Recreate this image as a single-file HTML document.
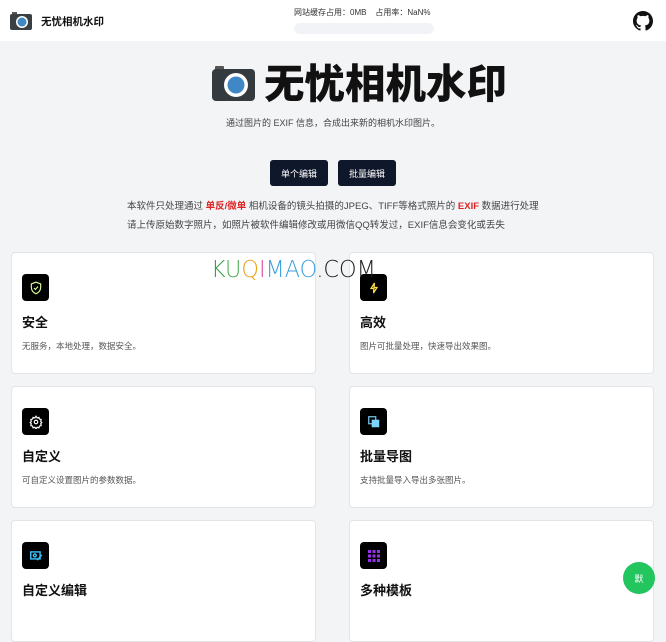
<!DOCTYPE html>
<html><head><meta charset="utf-8"><style>
*{margin:0;padding:0;box-sizing:border-box}
body{width:666px;height:604px;overflow:hidden;background:#f3f4f6;font-family:"Liberation Sans","Noto Sans CJK SC",sans-serif;position:relative;color:#111}
.hdr{position:absolute;left:0;top:0;width:666px;height:41px;background:#fff}
.abs{position:absolute}
.card{position:absolute;width:305px;height:122px;background:#fff;border:1px solid #e2e4e8;border-radius:4px}
.ib{position:absolute;left:10px;top:21px;width:27px;height:27px;background:#000;border-radius:4px;display:flex;align-items:center;justify-content:center}
.ct{position:absolute;left:10px;top:59px;font-size:13px;font-weight:bold}
.cd{position:absolute;left:10px;top:87px;font-size:8.5px;color:#555}
.btn{position:absolute;top:160px;width:58px;height:26px;background:#0f172a;border-radius:3px;color:#fff;font-size:9px;display:flex;align-items:center;justify-content:center}
.tx{position:absolute;left:127px;font-size:9.5px;color:#444;white-space:nowrap}
.red{color:#dc2626;font-weight:bold}
</style></head><body>
<div class="hdr">
<svg class="abs" style="left:10px;top:12px" width="22" height="18" viewBox="0 0 22 18"><rect x="2" y="0" width="5" height="3" fill="#555"/><rect x="0" y="2" width="22" height="16" rx="2" fill="#3a3f44"/><circle cx="12" cy="10" r="6" fill="#fff"/><circle cx="12" cy="10" r="4.5" fill="#3f88c5"/></svg>
<div class="abs" style="left:41px;top:14px;font-size:10.5px;font-weight:bold">无忧相机水印</div>
<div class="abs" style="left:294px;top:7px;font-size:8px;color:#333">网站缓存占用：0MB&nbsp;&nbsp;&nbsp;&nbsp;占用率：NaN%</div>
<div class="abs" style="left:294px;top:23px;width:140px;height:11px;background:#f1f3f6;border-radius:6px"></div>
<svg class="abs" style="left:633px;top:11px" width="20" height="20" viewBox="0 0 16 16"><path fill="#111" d="M8 0C3.58 0 0 3.58 0 8c0 3.540 2.29 6.53 5.47 7.59.4.07.55-.17.55-.38v-1.33c-2.23.48-2.7-1.07-2.7-1.07-.36-.92-.89-1.17-.89-1.17-.73-.5.05-.49.05-.49.8.06 1.23.83 1.23.83.72 1.22 1.870.87 2.33.66.07-.52.28-.87.51-1.07-1.78-.2-3.65-.89-3.65-3.95 0-.87.31-1.59.82-2.15-.08-.2-.36-1.02.08-2.12 0 0 .67-.21 2.2.82.64-.18 1.32-.27 2-.27.68 0 1.36.09 2 .27 1.53-1.04 2.2-.82 2.2-.82.44 1.1.16 1.92.08 2.12.51.56.82 1.27.82 2.15 0 3.07-1.87 3.75-3.65 3.95.29.25.54.73.54 1.48v2.2c0 .21.15.46.55.38A8.013 8.013 0 0016 8c0-4.42-3.58-8-8-8z"/></svg>
</div>
<svg class="abs" style="left:212px;top:66px" width="43" height="35" viewBox="0 0 43 35"><rect x="3" y="0" width="9" height="5" rx="1" fill="#555"/><rect x="0" y="3" width="43" height="32" rx="4" fill="#353a3f"/><circle cx="24" cy="19" r="12" fill="#fff"/><circle cx="24" cy="19" r="8.5" fill="#3f88c5"/></svg>
<div class="abs" style="left:264px;top:61px;font-size:40.5px;font-weight:900;white-space:nowrap;line-height:46px">无忧相机水印</div>
<div class="abs" style="left:0;width:666px;top:116px;text-align:center;font-size:9px;color:#444">通过图片的 EXIF 信息，合成出来新的相机水印图片。</div>
<div class="btn" style="left:270px">单个编辑</div>
<div class="btn" style="left:338px">批量编辑</div>
<div class="tx" style="top:198px">本软件只处理通过 <span class="red">单反/微单</span> 相机设备的镜头拍摄的JPEG、TIFF等格式照片的 <span class="red">EXIF</span> 数据进行处理</div>
<div class="tx" style="top:217px">请上传原始数字照片，如照片被软件编辑修改或用微信QQ转发过，EXIF信息会变化或丢失</div>

<div class="card" style="left:11px;top:252px"><div class="ib"><svg width="14" height="14" viewBox="0 0 24 24" fill="none" stroke="#d9f99d" stroke-width="2"><path d="M12 2l8 3v6c0 5-3.5 9-8 11-4.5-2-8-6-8-11V5z"/><path d="M8.5 12l2.5 2.5 4.5-5"/></svg></div><div class="ct">安全</div><div class="cd">无服务，本地处理，数据安全。</div></div>
<div class="card" style="left:349px;top:252px"><div class="ib"><svg width="12" height="14" viewBox="0 0 24 24" fill="none" stroke="#fde047" stroke-width="2.5"><path d="M13 2L6 13h6l-1 9 7-11h-6z"/></svg></div><div class="ct">高效</div><div class="cd">图片可批量处理，快速导出效果图。</div></div>
<div class="card" style="left:11px;top:386px"><div class="ib"><svg width="14" height="14" viewBox="0 0 24 24" fill="none" stroke="#fff" stroke-width="2"><circle cx="12" cy="12" r="3"/><path d="M12 2l2 3 3-1 1 3 3 1-1 3 2 2-2 2 1 3-3 1-1 3-3-1-2 3-2-3-3 1-1-3-3-1 1-3-2-2 2-2-1-3 3-1 1-3 3 1z"/></svg></div><div class="ct">自定义</div><div class="cd">可自定义设置图片的参数数据。</div></div>
<div class="card" style="left:349px;top:386px"><div class="ib"><svg width="14" height="14" viewBox="0 0 24 24"><rect x="3" y="3" width="12" height="12" fill="none" stroke="#7dd3fc" stroke-width="2"/><rect x="8" y="8" width="13" height="13" fill="#7dd3fc"/></svg></div><div class="ct">批量导图</div><div class="cd">支持批量导入导出多张图片。</div></div>
<div class="card" style="left:11px;top:520px"><div class="ib"><svg width="14" height="14" viewBox="0 0 24 24" fill="none" stroke="#38bdf8" stroke-width="2.5"><rect x="3" y="5" width="16" height="12"/><circle cx="10" cy="11" r="2.5"/><path d="M14 19l8-9"/></svg></div><div class="ct">自定义编辑</div></div>
<div class="card" style="left:349px;top:520px"><div class="ib"><svg width="12" height="12" viewBox="0 0 12 12" fill="#9333ea"><rect x="0" y="0" width="3" height="3"/><rect x="4.5" y="0" width="3" height="3"/><rect x="9" y="0" width="3" height="3"/><rect x="0" y="4.5" width="3" height="3"/><rect x="4.5" y="4.5" width="3" height="3"/><rect x="9" y="4.5" width="3" height="3"/><rect x="0" y="9" width="3" height="3"/><rect x="4.5" y="9" width="3" height="3"/><rect x="9" y="9" width="3" height="3"/></svg></div><div class="ct">多种模板</div></div>

<div class="abs" style="left:211px;top:257px;font-size:23px;white-space:nowrap;font-family:'DejaVu Sans',sans-serif;font-weight:300;transform:scaleX(0.97);transform-origin:left"><span style="color:#2e9d3e">K</span><span style="color:#4caf50">U</span><span style="color:#e8a317">Q</span><span style="color:#d64f9a">I</span><span style="color:#3aa0dc">M</span><span style="color:#3aa0dc">A</span><span style="color:#3aa0dc">O</span><span style="color:#222">.COM</span></div>

<div class="abs" style="left:623px;top:562px;width:32px;height:32px;border-radius:50%;background:#22c55e;color:#fff;font-size:9px;display:flex;align-items:center;justify-content:center">默</div>
</body></html>
